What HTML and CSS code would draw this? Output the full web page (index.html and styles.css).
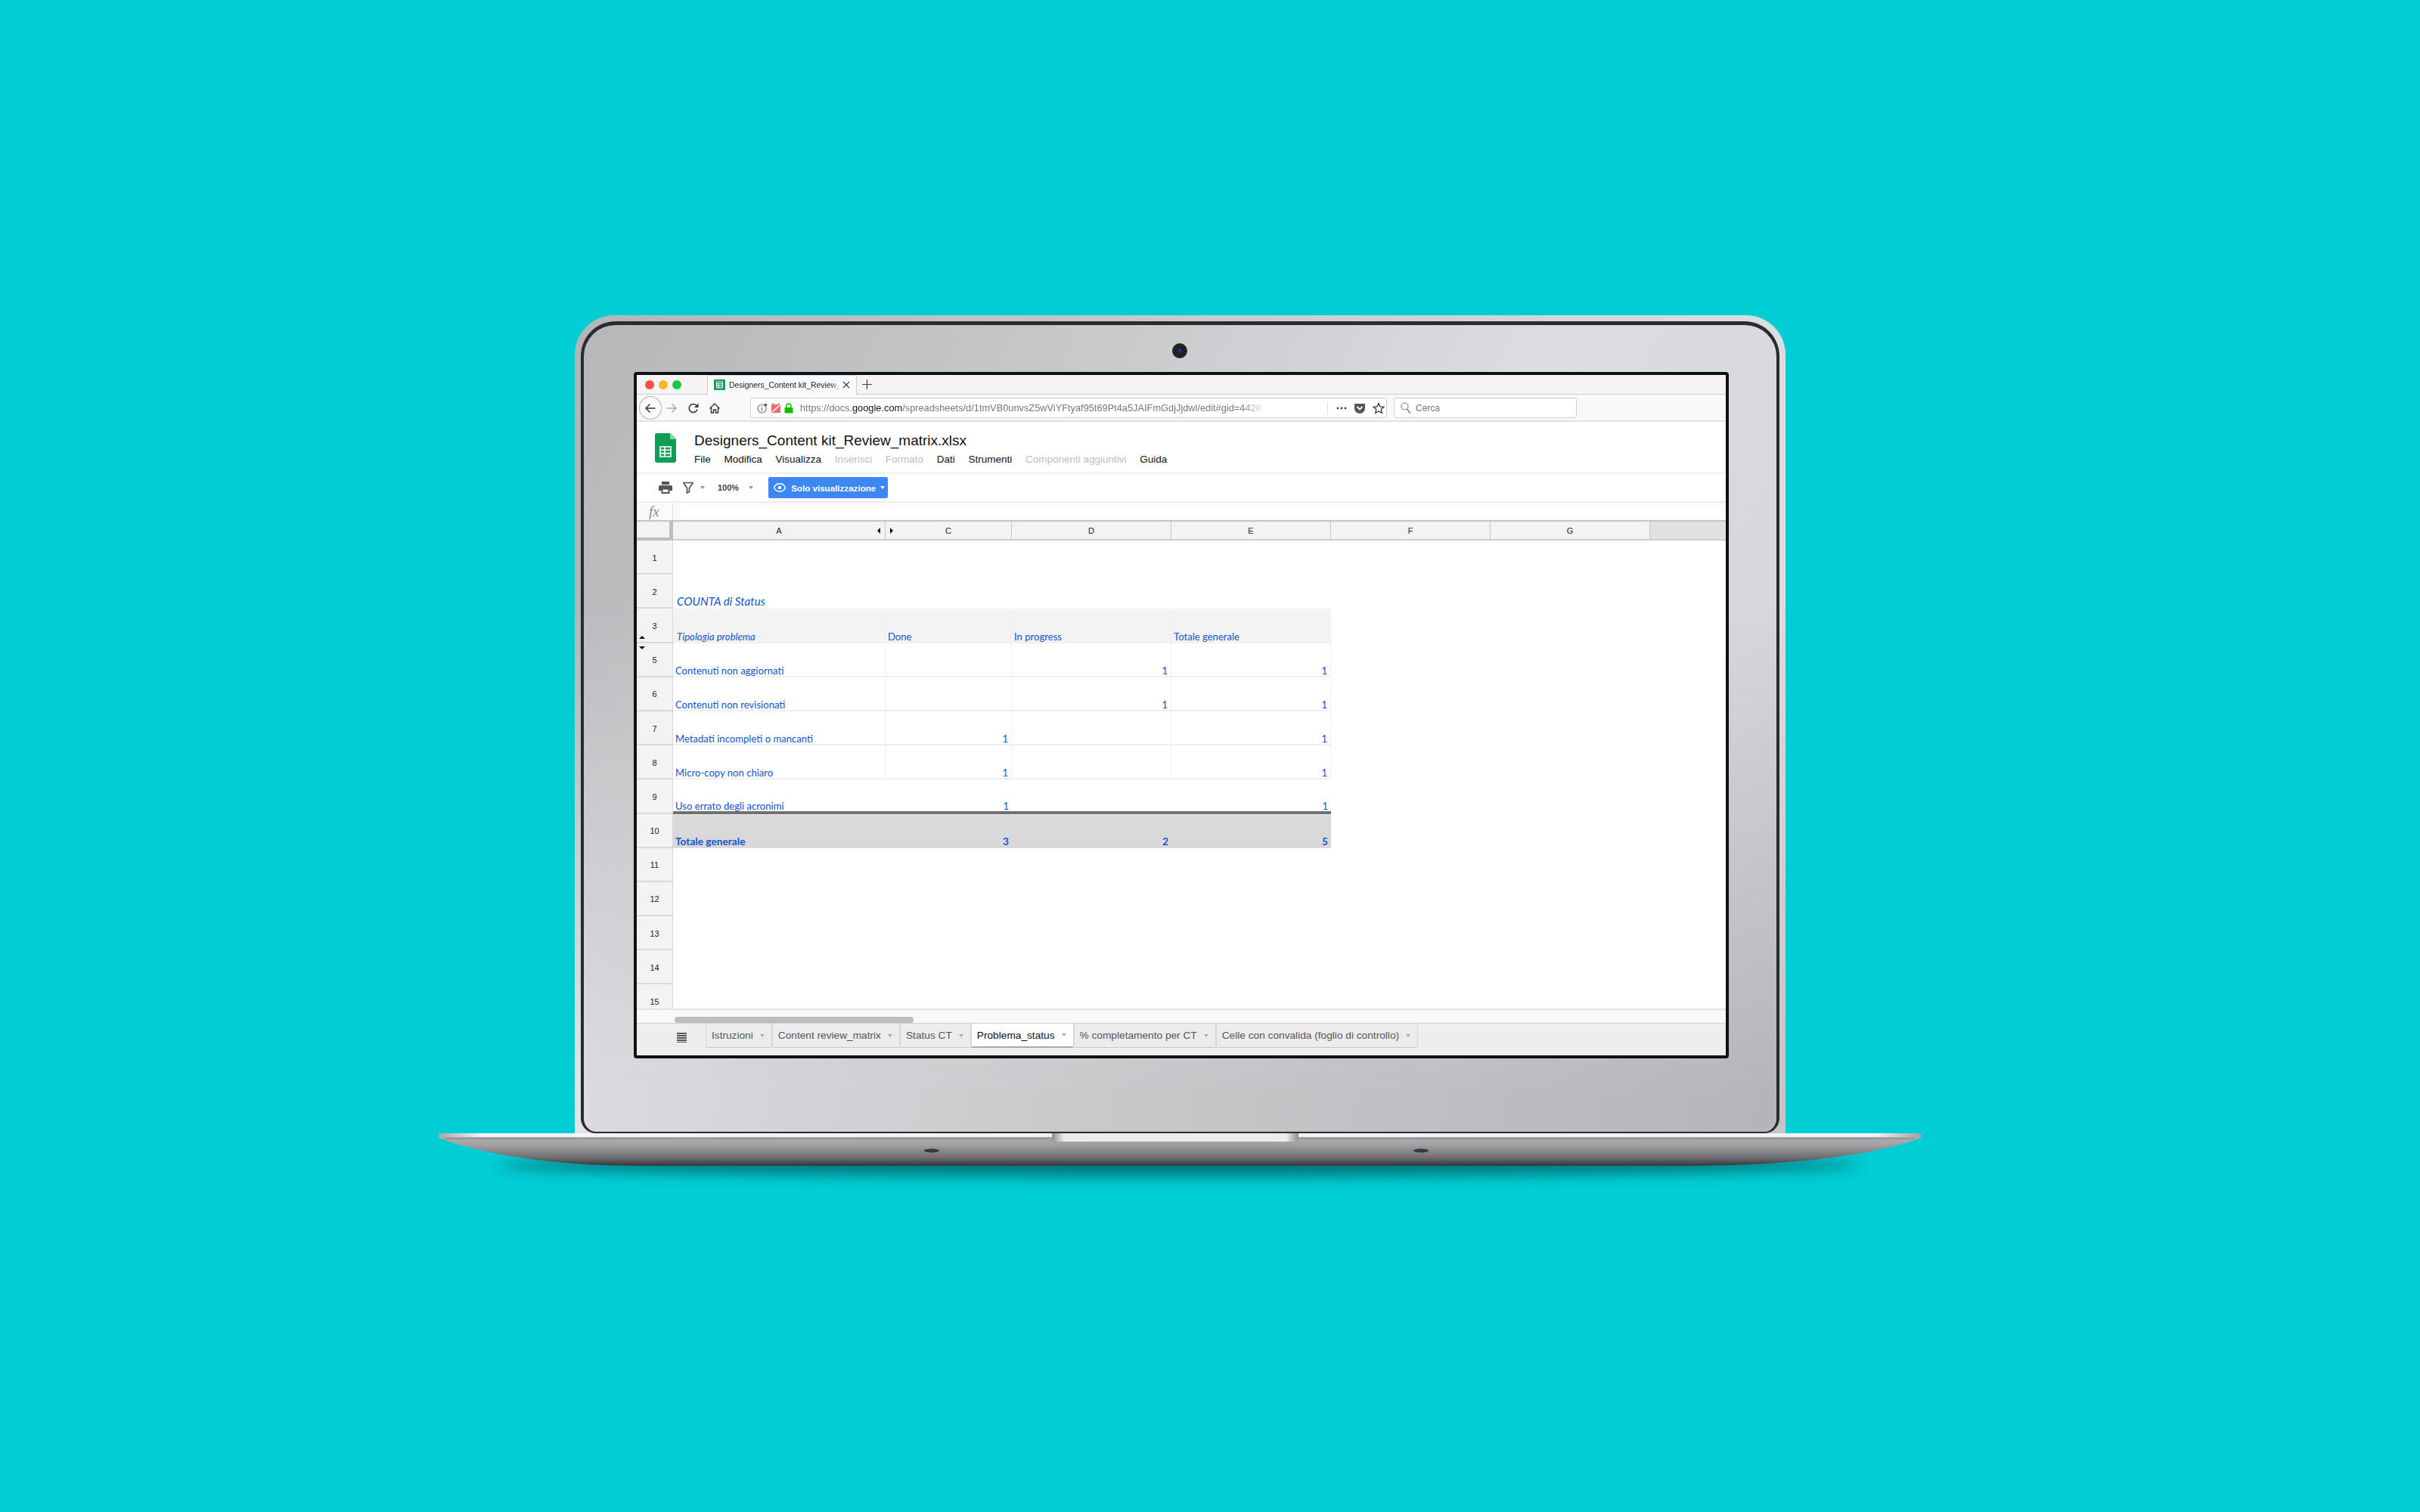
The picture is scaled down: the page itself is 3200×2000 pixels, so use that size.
FILE: index.html
```html
<!DOCTYPE html>
<html>
    <head>
        <meta charset="utf-8">
        <title>Designers_Content kit_Review_matrix.xlsx</title>
        <link rel="stylesheet" href="styles.css">
    </head>
    <body>
        <div class="laptop">
            <div class="lid">
                <div class="bezel">
                    <div class="camera"></div>
                    <div class="screen">

                        <!-- firefox -->
                        <div class="tabstrip">
                            <div class="lights">
                                <span class="light red"></span>
                                <span class="light yellow"></span>
                                <span class="light green"></span>
                            </div>
                            <div class="browser-tab">
                                <svg class="favicon" viewBox="0 0 15 14"><rect width="15" height="14" rx="1" fill="#0f9d58"/><path d="M3.5 3h8v8h-8zM3.5 5.7h8M3.5 8.3h8M6.2 5.7V11" fill="none" stroke="#fff" stroke-width="1"/></svg>
                                <span class="tab-title">Designers_Content kit_Review_m</span>
                                <svg class="tab-close" viewBox="0 0 10 10"><path d="M1 1l8 8M9 1l-8 8" stroke="#333" stroke-width="1.1"/></svg>
                            </div>
                            <svg class="tab-plus" viewBox="0 0 13 13"><path d="M6.5 0v13M0 6.5h13" stroke="#444" stroke-width="1.2"/></svg>
                        </div>

                        <div class="navbar">
                            <div class="back-btn">
                                <svg viewBox="0 0 16 16"><path d="M14.5 8H2M7.5 2.5L2 8l5.5 5.5" fill="none" stroke="#333" stroke-width="1.4"/></svg>
                            </div>
                            <svg class="nav-icon forward" viewBox="0 0 16 16"><path d="M1.5 8H14M8.5 2.5L14 8l-5.500 5.500" fill="none" stroke="#aaa" stroke-width="1.4"/></svg>
                            <svg class="nav-icon reload" viewBox="0 0 16 16"><path d="M13 9.500A5.500 5.500 0 1 1 11.500 4L13.500 6" fill="none" stroke="#333" stroke-width="1.500"/><path d="M14.500 1.500v5.500H9z" fill="#333"/></svg>
                            <svg class="nav-icon home" viewBox="0 0 16 16"><path d="M1.500 8.500L8 2l6.500 6.500M3.500 7v7h3v-4h3v4h3V7" fill="none" stroke="#333" stroke-width="1.400"/></svg>
                            <div class="urlbar">
                                <svg class="url-icon info" viewBox="0 0 14 14"><circle cx="6.500" cy="7.500" r="5.500" fill="none" stroke="#777" stroke-width="1.200"/><path d="M6.500 6.500v4M6.500 4v1.300" stroke="#777" stroke-width="1.400"/><circle cx="11.500" cy="2.500" r="1.800" fill="#555"/></svg>
                                <svg class="url-icon blocked" viewBox="0 0 14 14"><path d="M1 2h12v11H1z" fill="#f36a6a"/><path d="M2 12L12 3" stroke="#fff" stroke-width="1.600"/><path d="M3.500 0v3M10.500 0v3" stroke="#f36a6a" stroke-width="1.500"/></svg>
                                <svg class="url-icon lock" viewBox="0 0 14 14"><path d="M1.500 6h11v7.500h-11z" fill="#12bc00"/><path d="M4 6.500V4a3 3 0 0 1 6 0v2.500" fill="none" stroke="#12bc00" stroke-width="1.500"/></svg>
                                <div class="url-wrap">
                                    <div class="url-text">https://docs.<b>google.com</b>/spreadsheets/d/1tmVB0unvsZ5wViYFtyaf95t69Pt4a5JAIFmGdjJjdwl/edit#gid=4428</div>
                                </div>
                                <div class="url-sep"></div>
                                <svg class="url-dots" viewBox="0 0 14 4"><circle cx="2" cy="2" r="1.400"/><circle cx="7" cy="2" r="1.400"/><circle cx="12" cy="2" r="1.400"/></svg>
                                <svg class="url-pocket" viewBox="0 0 16 16"><path d="M1 2h14v6A7 7 0 0 1 1 8z" fill="#55555a"/><path d="M4.500 6L8 9.500 11.500 6" fill="none" stroke="#fff" stroke-width="1.800"/></svg>
                                <svg class="url-star" viewBox="0 0 16 16"><path d="M8 1.500l2 4.400 4.800.500-3.600 3.200 1 4.700L8 11.900l-4.200 2.400 1-4.700L1.200 6.400 6 5.900z" fill="none" stroke="#333" stroke-width="1.300"/></svg>
                            </div>
                            <div class="searchbar">
                                <svg viewBox="0 0 14 16"><circle cx="5.500" cy="5.500" r="4.500" fill="none" stroke="#777" stroke-width="1.100"/><path d="M8.500 9l4.500 6" stroke="#777" stroke-width="1.300"/></svg>
                                <span>Cerca</span>
                            </div>
                        </div>

                        <!-- sheets -->
                        <div class="doc-header">
                            <svg class="doc-logo" viewBox="0 0 28 39">
                                <path d="M3 0h17l8 8v28a3 3 0 0 1-3 3H3a3 3 0 0 1-3-3V3a3 3 0 0 1 3-3z" fill="#0f9d58"/>
                                <path d="M20 0l8 8h-8z" fill="#87ceac"/>
                                <path d="M7 18h14v13H7zM7 22.300h14M7 26.600h14M13 18v13" fill="none" stroke="#fff" stroke-width="1.600"/>
                            </svg>
                            <div class="doc-titles">
                                <div class="doc-title">Designers_Content kit_Review_matrix.xlsx</div>
                                <div class="menu">
                                    <span>File</span>
                                    <span>Modifica</span>
                                    <span>Visualizza</span>
                                    <span class="off">Inserisci</span>
                                    <span class="off">Formato</span>
                                    <span>Dati</span>
                                    <span>Strumenti</span>
                                    <span class="off">Componenti aggiuntivi</span>
                                    <span>Guida</span>
                                </div>
                            </div>
                        </div>

                        <div class="toolbar">
                            <svg class="tool-print" viewBox="0 0 18 16"><path d="M4 0h10v4H4zM1.500 5h15A1.500 1.500 0 0 1 18 6.500V12h-3.500v4h-11v-4H0V6.500A1.500 1.500 0 0 1 1.500 5z" fill="#555"/><path d="M5.500 10.500h7V14h-7z" fill="#fff"/></svg>
                            <svg class="tool-filter" viewBox="0 0 16 16"><path d="M1 1.500h14M2 2l4.500 6.500V15l3-1.500v-5L14 2" fill="none" stroke="#555" stroke-width="1.700"/></svg>
                            <span class="caret tool-caret1"></span>
                            <span class="zoom-label">100%</span>
                            <span class="caret tool-caret2"></span>
                            <div class="view-btn">
                                <svg viewBox="0 0 16 12"><path d="M8 .8C4.500.8 1.700 3 .5 6c1.200 3 4 5.200 7.500 5.200s6.300-2.200 7.500-5.200C14.300 3 11.500.8 8 .8z" fill="none" stroke="#fff" stroke-width="1.400"/><circle cx="8" cy="6" r="2.300" fill="#fff"/></svg>
                                <span>Solo visualizzazione</span>
                                <span class="caret white"></span>
                            </div>
                        </div>

                        <div class="formula">
                            <span class="fx">fx</span>
                            <div class="formula-input"></div>
                        </div>

                        <!-- griglia -->
                        <div class="colhead">
                            <div class="corner"></div>
                            <div class="col col-a">A<span class="arrow-left"></span></div>
                            <div class="col col-c"><span class="arrow-right"></span>C</div>
                            <div class="col col-d">D</div>
                            <div class="col col-e">E</div>
                            <div class="col col-e">F</div>
                            <div class="col col-e">G</div>
                            <div class="col-rest"></div>
                        </div>

                        <div class="grid">
                            <div class="row">
                                <div class="rownum">1</div>
                            </div>
                            <div class="row">
                                <div class="rownum">2</div>
                                <div class="cell title-cell">COUNTA di Status</div>
                            </div>
                            <div class="row head-row">
                                <div class="rownum">3<span class="arrow-up"></span></div>
                                <div class="cell ca lined em">Tipologia problema</div>
                                <div class="cell cc lined">Done</div>
                                <div class="cell cd lined">In progress</div>
                                <div class="cell cd lined">Totale generale</div>
                            </div>
                            <div class="row body-row">
                                <div class="rownum">5<span class="arrow-down"></span></div>
                                <div class="cell ca lined">Contenuti non aggiornati</div>
                                <div class="cell cc lined num"></div>
                                <div class="cell cd lined num">1</div>
                                <div class="cell cd lined num">1</div>
                            </div>
                            <div class="row body-row">
                                <div class="rownum">6</div>
                                <div class="cell ca lined">Contenuti non revisionati</div>
                                <div class="cell cc lined num"></div>
                                <div class="cell cd lined num">1</div>
                                <div class="cell cd lined num">1</div>
                            </div>
                            <div class="row body-row">
                                <div class="rownum">7</div>
                                <div class="cell ca lined">Metadati incompleti o mancanti</div>
                                <div class="cell cc lined num">1</div>
                                <div class="cell cd lined num"></div>
                                <div class="cell cd lined num">1</div>
                            </div>
                            <div class="row body-row">
                                <div class="rownum">8</div>
                                <div class="cell ca lined">Micro-copy non chiaro</div>
                                <div class="cell cc lined num">1</div>
                                <div class="cell cd lined num"></div>
                                <div class="cell cd lined num">1</div>
                            </div>
                            <div class="row last-row">
                                <div class="rownum">9</div>
                                <div class="cell ca">Uso errato degli acronimi</div>
                                <div class="cell cc num">1</div>
                                <div class="cell cd num"></div>
                                <div class="cell cd num">1</div>
                            </div>
                            <div class="row total-row">
                                <div class="rownum">10</div>
                                <div class="cell ca">Totale generale</div>
                                <div class="cell cc num">3</div>
                                <div class="cell cd num">2</div>
                                <div class="cell cd num">5</div>
                            </div>
                            <div class="row"><div class="rownum">11</div></div>
                            <div class="row"><div class="rownum">12</div></div>
                            <div class="row"><div class="rownum">13</div></div>
                            <div class="row"><div class="rownum">14</div></div>
                            <div class="row"><div class="rownum">15</div></div>
                        </div>

                        <div class="scrollzone">
                            <div class="scroll-side"></div>
                            <div class="scroll-track"><div class="scroll-thumb"></div></div>
                        </div>

                        <div class="sheetbar">
                            <div class="allsheets"></div>
                            <div class="sheet">Istruzioni<span class="caret"></span></div>
                            <div class="sheet">Content review_matrix<span class="caret"></span></div>
                            <div class="sheet">Status CT<span class="caret"></span></div>
                            <div class="sheet active">Problema_status<span class="caret"></span></div>
                            <div class="sheet">% completamento per CT<span class="caret"></span></div>
                            <div class="sheet">Celle con convalida (foglio di controllo)<span class="caret"></span></div>
                        </div>

                    </div>
                </div>
            </div>

            <svg class="base" viewBox="0 0 1960 80" width="1960" height="80">
                <defs>
                    <linearGradient id="baseFill" x1="0" y1="0" x2="0" y2="1">
                        <stop offset="0" stop-color="#b4b4b6"/>
                        <stop offset="0.35" stop-color="#a2a2a4"/>
                        <stop offset="0.75" stop-color="#6f6f73"/>
                        <stop offset="1" stop-color="#36363a"/>
                    </linearGradient>
                    <linearGradient id="bandFill" x1="0" y1="0" x2="1" y2="0">
                        <stop offset="0" stop-color="#a8a8a8"/>
                        <stop offset="0.03" stop-color="#f4f4f4"/>
                        <stop offset="0.97" stop-color="#f2f2f2"/>
                        <stop offset="1" stop-color="#a0a0a0"/>
                    </linearGradient>
                    <linearGradient id="notchFill" x1="0" y1="0" x2="1" y2="0">
                        <stop offset="0" stop-color="#8f8f8f"/>
                        <stop offset="0.05" stop-color="#ececec"/>
                        <stop offset="0.95" stop-color="#ececec"/>
                        <stop offset="1" stop-color="#8f8f8f"/>
                    </linearGradient>
                    <filter id="soft" x="-5%" y="-100%" width="110%" height="300%">
                        <feGaussianBlur stdDeviation="9"/>
                    </filter>
                </defs>
                <ellipse cx="980" cy="42" rx="900" ry="15" fill="#00494e" opacity="0.65" filter="url(#soft)"/>
                <path d="M0 0H1960V6C1900 30 1780 43 1650 43H265C130 43 40 22 0 6Z" fill="url(#baseFill)"/>
                <path d="M0 0H1960V5H0Z" fill="url(#bandFill)"/>
                <path d="M8 7H1952" stroke="#8f8f91" stroke-width="1.500"/>
                <path d="M806 5L816 13H1132L1142 5" fill="none" stroke="#a0a0a2" stroke-width="2"/>
                <path d="M811 0H1137V6Q1137 11 1130 11H818Q811 11 811 6Z" fill="url(#notchFill)"/>
                <ellipse cx="652" cy="23" rx="10" ry="2.500" fill="#38383c"/>
                <ellipse cx="1299" cy="23" rx="10" ry="2.500" fill="#38383c"/>
            </svg>
        </div>
    </body>
</html>
```

FILE: styles.css
```css
* {
    box-sizing: border-box;
}

body {
    margin: 0;
    height: 2000px;
    overflow: hidden;
    background-color: #00cdd4;
    font-family: "Liberation Sans", Arial, sans-serif;
    color: #222;
}

.laptop {
    width: 1960px;
    margin-left: 580px;
    padding-top: 417px;
}

/* laptop lid */
.lid {
    position: relative;
    width: 1601px;
    height: 1082px;
    margin-left: 180px;
    padding: 8px 8px 0 8px;
    border-radius: 52px 52px 0 0;
    background: linear-gradient(to right, #b4b5b7, #dcdde0);
}

.lid::before {
    content: "";
    position: absolute;
    inset: 0;
    background: linear-gradient(to right, #e4e4e6, #c4c5c7);
    -webkit-mask-image: linear-gradient(to bottom, transparent 35%, #000 95%);
    mask-image: linear-gradient(to bottom, transparent 35%, #000 95%);
}

.bezel {
    position: relative;
    height: 1074px;
    padding: 62px 0 0 66px;
    border: 4px solid #2b2b2d;
    border-top-width: 5px;
    border-bottom-width: 2px;
    border-radius: 46px 46px 20px 20px;
    background: linear-gradient(115deg, #b6b7b9 0%, #c6c7c9 30%, #dcdde0 62%, #d3d4d6 100%);
}

.bezel::before {
    content: "";
    position: absolute;
    inset: 0;
    border-radius: 0 0 18px 18px;
    background: linear-gradient(100deg, #dfe0e3 0%, #c8c8cb 50%, #b4b5b8 100%);
    -webkit-mask-image: linear-gradient(to bottom, transparent 35%, #000 95%);
    mask-image: linear-gradient(to bottom, transparent 35%, #000 95%);
}

.camera {
    position: absolute;
    left: 778px;
    top: 24px;
    width: 20px;
    height: 20px;
    border-radius: 50%;
    background: radial-gradient(circle, #1c2f8a 0, #1c2f8a 2px, #1d1d20 4px, #2d2d30 100%);
    z-index: 1;
}

.screen {
    position: relative;
    display: flex;
    flex-direction: column;
    width: 1448px;
    height: 908px;
    border: 4px solid #111;
    border-radius: 4px;
    background-color: #fff;
    overflow: hidden;
}

.base {
    display: block;
    overflow: visible;
}

/* firefox */
.tabstrip {
    display: flex;
    align-items: center;
    flex: none;
    height: 26px;
    border-bottom: 1px solid #cfcfcf;
    background-color: #f6f3f2;
}

.lights {
    display: flex;
    align-items: center;
    gap: 6px;
    width: 93px;
    padding-left: 11px;
}

.light {
    width: 12px;
    height: 12px;
    border-radius: 50%;
}

.red {
    background-color: #fc4f4c;
}

.yellow {
    background-color: #fdb51e;
}

.green {
    background-color: #14cb3f;
}

.browser-tab {
    display: flex;
    align-items: center;
    width: 198px;
    height: 26px;
    padding-left: 8px;
    border-top: 1px solid #bfe0f8;
    border-right: 1px solid #cfcfcf;
    border-left: 1px solid #cfcfcf;
    background-color: #f9f9fa;
}

.favicon {
    flex: none;
    width: 15px;
    height: 14px;
}

.tab-title {
    width: 146px;
    margin-left: 5px;
    font-size: 10.400px;
    white-space: nowrap;
    -webkit-mask-image: linear-gradient(to right, #000 92%, rgba(0, 0, 0, 0.2));
    mask-image: linear-gradient(to right, #000 92%, rgba(0, 0, 0, 0.2));
}

.tab-close {
    flex: none;
    width: 10px;
    height: 10px;
    margin-left: 4px;
}

.tab-plus {
    width: 13px;
    height: 13px;
    margin-left: 7px;
}

.navbar {
    display: flex;
    align-items: center;
    flex: none;
    height: 36px;
    padding-top: 1px;
    border-bottom: 2px solid #e2e2e2;
    background-color: #f9f9fa;
}

.back-btn {
    display: flex;
    align-items: center;
    justify-content: center;
    flex: none;
    width: 30px;
    height: 31px;
    margin-left: 3px;
    border: 1px solid #b3b3b3;
    border-radius: 50%;
    background-color: #fbfbfb;
}

.back-btn svg {
    width: 16px;
    height: 16px;
}

.nav-icon {
    flex: none;
    width: 16px;
    height: 16px;
}

.forward {
    margin-left: 5px;
}

.reload {
    margin-left: 13px;
}

.home {
    margin-left: 12px;
}

.urlbar {
    display: flex;
    align-items: center;
    flex: none;
    width: 842px;
    height: 27px;
    margin-left: 39px;
    padding-left: 8px;
    border: 1px solid #cfcfd1;
    border-radius: 3px;
    background-color: #fff;
}

.url-icon {
    flex: none;
    width: 14px;
    height: 14px;
}

.blocked {
    margin-left: 4px;
}

.lock {
    margin-left: 3px;
}

.url-wrap {
    flex: none;
    width: 697px;
    margin-left: 8px;
}

.url-text {
    width: 620px;
    font-size: 12.800px;
    color: #777;
    white-space: nowrap;
    -webkit-mask-image: linear-gradient(to right, #000 94%, rgba(0, 0, 0, 0.1) 99%);
    mask-image: linear-gradient(to right, #000 94%, rgba(0, 0, 0, 0.1) 99%);
}

.url-text b {
    font-weight: normal;
    color: #111;
}

.url-sep {
    flex: none;
    width: 1px;
    height: 18px;
    background-color: #ddd;
}

.url-dots {
    flex: none;
    width: 14px;
    height: 4px;
    margin-left: 11px;
    fill: #444;
}

.url-pocket {
    flex: none;
    width: 16px;
    height: 16px;
    margin-left: 9px;
}

.url-star {
    flex: none;
    width: 16px;
    height: 16px;
    margin-left: 9px;
}

.searchbar {
    display: flex;
    align-items: center;
    flex: none;
    width: 242px;
    height: 27px;
    margin-left: 9px;
    padding-left: 8px;
    border: 1px solid #cfcfd1;
    border-radius: 3px;
    background-color: #fff;
    font-size: 12px;
    color: #777;
}

.searchbar svg {
    width: 14px;
    height: 16px;
    margin-right: 6px;
}

/* sheets header */
.doc-header {
    display: flex;
    flex: none;
    height: 69px;
    border-bottom: 2px solid #efefef;
    background-color: #fff;
}

.doc-logo {
    flex: none;
    width: 28px;
    height: 39px;
    margin: 15px 0 0 24px;
}

.doc-titles {
    margin-left: 24px;
    padding-top: 14px;
}

.doc-title {
    font-size: 19px;
    line-height: 22px;
    color: #111;
}

.menu {
    display: flex;
    gap: 17.700px;
    margin-top: 6px;
    font-size: 13.500px;
    line-height: 16px;
    color: #111;
}

.menu .off {
    color: #bdbdbd;
}

.toolbar {
    display: flex;
    align-items: center;
    flex: none;
    height: 38px;
    border-bottom: 2px solid #ececec;
}

.tool-print {
    width: 18px;
    height: 16px;
    margin-left: 29px;
}

.tool-filter {
    width: 16px;
    height: 16px;
    margin-left: 13px;
}

.caret {
    display: inline-block;
    width: 0;
    height: 0;
    border-top: 4px solid #999;
    border-right: 3px solid transparent;
    border-left: 3px solid transparent;
}

.caret.white {
    border-top-color: #fff;
}

.tool-caret1 {
    margin-left: 8px;
}

.zoom-label {
    margin-left: 17px;
    font-size: 11px;
    font-weight: bold;
    color: #444;
}

.tool-caret2 {
    margin-left: 13px;
}

.view-btn {
    display: flex;
    align-items: center;
    width: 158px;
    height: 28px;
    margin-left: 20px;
    padding-left: 7px;
    border-radius: 2px;
    background-color: #3d87f5;
    font-size: 11.600px;
    font-weight: bold;
    color: #fff;
}

.view-btn svg {
    width: 16px;
    height: 12px;
    margin-right: 7px;
}

.view-btn .caret {
    margin-left: 6px;
}

.formula {
    display: flex;
    align-items: center;
    flex: none;
    height: 25px;
    border-bottom: 2px solid #c4c4c4;
    background-color: #fafafa;
}

.fx {
    width: 48px;
    padding-left: 16px;
    border-right: 1px solid #ddd;
    font-family: "Liberation Serif", serif;
    font-size: 19px;
    font-style: italic;
    line-height: 20px;
    color: #8a8a8a;
}

.formula-input {
    flex: 1;
    height: 17px;
    margin-left: 10px;
    background-color: #fff;
}

/* griglia */
.colhead {
    display: flex;
    flex: none;
    height: 25px;
    background-color: #f3f3f3;
    font-size: 11px;
    color: #222;
}

.corner {
    flex: none;
    width: 48px;
    border-right: 5px solid #bdbdbd;
    border-bottom: 4px solid #bdbdbd;
}

.col {
    position: relative;
    display: flex;
    align-items: center;
    justify-content: center;
    flex: none;
    border-right: 1px solid #c8c8c8;
    border-bottom: 2px solid #cfcfcf;
}

.col-a {
    width: 281px;
}

.col-c {
    width: 167px;
}

.col-d,
.col-e {
    width: 211px;
}

.col-rest {
    flex: 1;
    border-bottom: 2px solid #cfcfcf;
    background-color: #e0e0e0;
}

.arrow-left,
.arrow-right {
    position: absolute;
    top: 8px;
    width: 0;
    height: 0;
    border-top: 4px solid transparent;
    border-bottom: 4px solid transparent;
}

.arrow-left {
    right: 6px;
    border-right: 4px solid #111;
}

.arrow-right {
    left: 6px;
    border-left: 4px solid #111;
}

.grid {
    flex: none;
    height: 619px;
    overflow: hidden;
}

.row {
    display: flex;
    height: 45.200px;
}

.rownum {
    position: relative;
    display: flex;
    align-items: center;
    justify-content: center;
    flex: none;
    width: 48px;
    padding-top: 2px;
    border-right: 1px solid #d8d8d8;
    border-bottom: 2px solid #d8d8d8;
    background-color: #f3f3f3;
    font-size: 11px;
    color: #222;
}

.arrow-up,
.arrow-down {
    position: absolute;
    left: 3px;
    width: 0;
    height: 0;
    border-right: 4px solid transparent;
    border-left: 4px solid transparent;
}

.arrow-up {
    bottom: 4px;
    border-bottom: 4px solid #111;
}

.arrow-down {
    top: 4px;
    border-top: 4px solid #111;
}

.cell {
    display: flex;
    align-items: flex-end;
    flex: none;
    padding: 0 3px;
    font-family: Lato, "Open Sans", sans-serif;
    font-size: 13.100px;
    line-height: 14px;
    white-space: nowrap;
    color: #1155cc;
}

.ca {
    width: 281px;
}

.cc {
    width: 167px;
}

.cd {
    width: 211px;
}

.num {
    justify-content: flex-end;
    padding-right: 4px;
}

.lined {
    border-right: 1px solid #f0f0f0;
    border-bottom: 2px solid #f0f0f0;
}

.title-cell {
    width: 400px;
    padding-bottom: 3px;
    padding-left: 5px;
    font-size: 15.200px;
    font-style: italic;
}

.head-row .cell {
    background-color: #f3f3f3;
}

.em {
    padding-left: 5px;
    font-style: italic;
}

.last-row .cell {
    border-bottom: 4px solid #707070;
}

.total-row .cell {
    padding-bottom: 2px;
    border-top: 1px solid #eee;
    background-color: #d9d9d9;
    font-size: 13.700px;
    font-weight: bold;
}

.scrollzone {
    display: flex;
    flex: none;
    height: 19px;
    border-top: 2px solid #e4e4e4;
    background-color: #f8f8f8;
}

.scroll-side {
    flex: none;
    width: 48px;
}

.scroll-track {
    flex: 1;
    padding-top: 8px;
    border-top: 1px solid #eee;
}

.scroll-thumb {
    width: 316px;
    height: 8px;
    margin-left: 2px;
    border-radius: 4px;
    background-color: #bdbdbd;
}

.sheetbar {
    display: flex;
    flex: 1;
    align-items: flex-start;
    border-top: 1px solid #cfcfcf;
    background-color: #eee;
}

.allsheets {
    flex: none;
    width: 13px;
    height: 13px;
    margin: 12px 25px 0 53px;
    background: repeating-linear-gradient(to bottom, #555 0, #555 2px, #eee 2px, #eee 3px);
}

.sheet {
    display: flex;
    align-items: center;
    flex: none;
    height: 32px;
    padding: 0 9px 0 7px;
    border-right: 1px solid #d6d6d6;
    border-bottom: 1px solid #c8c8c8;
    border-left: 1px solid #d6d6d6;
    border-radius: 0 0 2px 2px;
    background-color: #ececec;
    font-size: 13.700px;
    white-space: nowrap;
    color: #555;
}

.sheet .caret {
    margin-left: 9px;
    border-top-color: #aaa;
}

.sheet.active {
    border-bottom: 2px solid #aaa;
    background-color: #fff;
    color: #111;
}
```
